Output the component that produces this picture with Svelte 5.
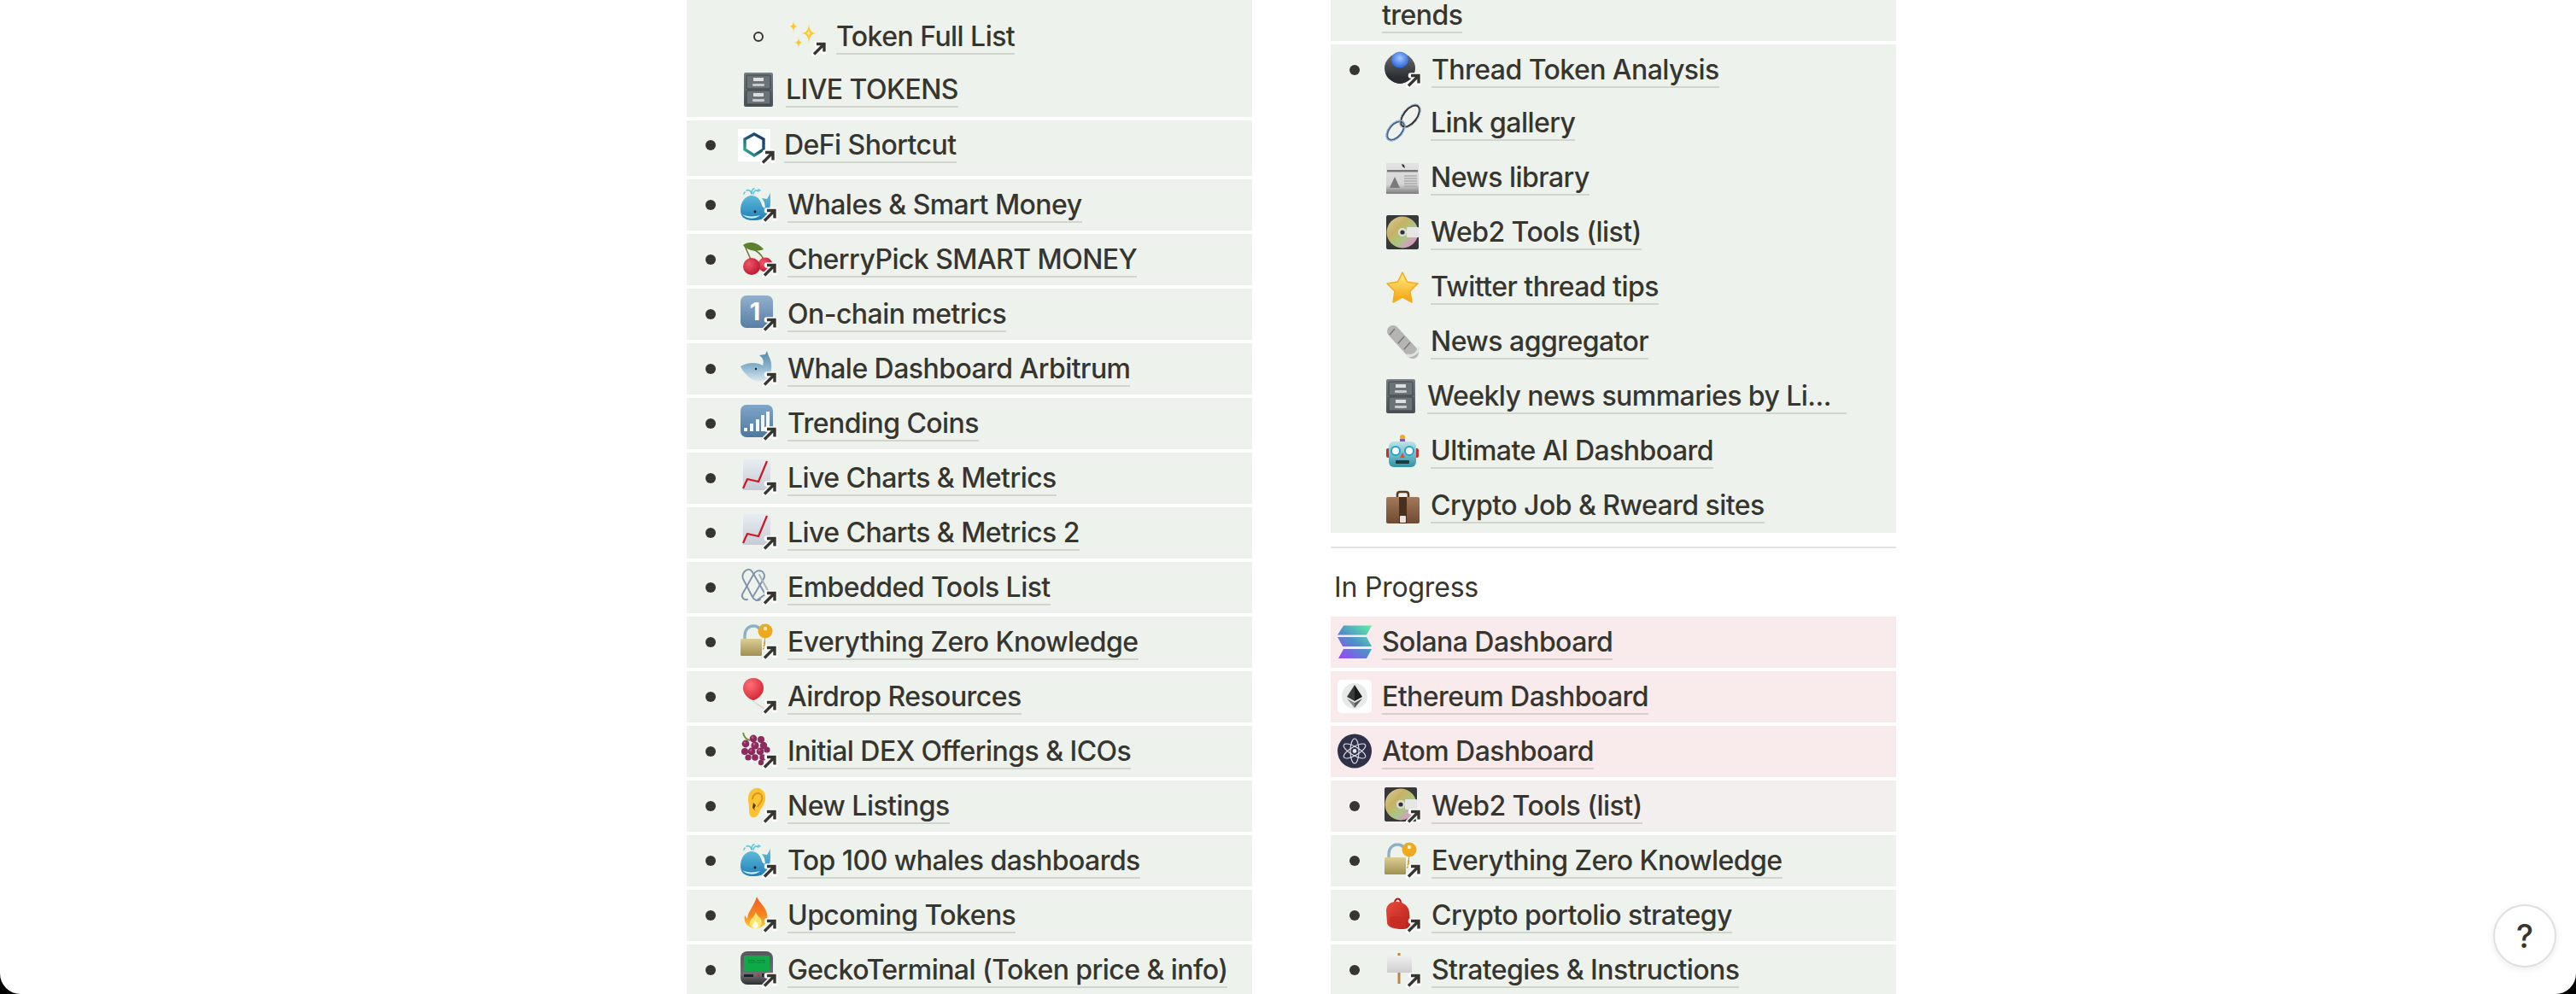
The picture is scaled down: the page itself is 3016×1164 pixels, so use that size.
<script>
	const star = (x, y, r, fill) =>
		`<path fill="${fill}" d="M${x} ${y - r}Q${x} ${y} ${x + r * 0.7} ${y}Q${x} ${y} ${x} ${y + r}Q${x} ${y} ${x - r * 0.7} ${y}Q${x} ${y} ${x} ${y - r}Z"/>`;

	const lineChart = `<defs><linearGradient id="pg" x1="0" y1="0" x2="0" y2="1"><stop offset="0" stop-color="#e9edf3"/><stop offset="1" stop-color="#c6ccd6"/></linearGradient></defs>
		<rect x="3" y="0" width="32" height="36" fill="url(#pg)"/>
		<path d="M3 34L8 23L21 26L31 2" fill="none" stroke="#cf1620" stroke-width="2.2" stroke-linejoin="round"/>`;

	const blueWhale = `<defs><linearGradient id="wh" x1="0" y1="0" x2="0" y2="1"><stop offset="0" stop-color="#66bfe0"/><stop offset="1" stop-color="#1f7fb6"/></linearGradient></defs>
		<path fill="url(#wh)" d="M0 28C0 18 6 11 13 11c7 0 10 5 12 11 1 3 2 4 4 3l-1-6-3-5 6 1 4-7 0 10c0 10-4 17-9 20-4 2-8 2-12 2C6 40 0 37 0 28z"/>
		<path fill="#d3edf6" d="M2 33c5 3 14 3 21 1-5 5-16 5-21-1z"/>
		<circle cx="17" cy="30" r="1.4" fill="#111"/>
		<path d="M13 9c0-4 1-6 3-6M13 9c-1-4-3-5-6-4M15 9c1-4 3-5 6-3M5 7l-1 2M21 4l2 1" fill="none" stroke="#58c3dc" stroke-width="1.6" stroke-linecap="round"/>`;

	const cabinet = `<defs><linearGradient id="cb" x1="0" y1="0" x2="0" y2="1"><stop offset="0" stop-color="#777e84"/><stop offset="1" stop-color="#4a5056"/></linearGradient></defs>
		<rect x="0" y="0" width="34" height="40" rx="2" fill="url(#cb)"/>
		<rect x="3" y="3" width="28" height="16" rx="1" fill="#6b7278" stroke="#3e4349"/>
		<rect x="3" y="21" width="28" height="16" rx="1" fill="#6b7278" stroke="#3e4349"/>
		<rect x="11" y="6" width="12" height="4" fill="#dcdee0"/><rect x="10" y="13" width="14" height="3" rx="1" fill="#c6c9cc"/>
		<rect x="11" y="24" width="12" height="4" fill="#dcdee0"/><rect x="10" y="31" width="14" height="3" rx="1" fill="#c6c9cc"/>`;

	const lock = `<defs><linearGradient id="lk" x1="0" y1="0" x2="0" y2="1"><stop offset="0" stop-color="#dccf94"/><stop offset="1" stop-color="#a09050"/></linearGradient></defs>
		<path d="M5 20v-6C5 7 10 3 15 3s8 3 9 7" fill="none" stroke="#8fb0c4" stroke-width="3.4"/>
		<rect x="0" y="18" width="25" height="20" rx="1.5" fill="url(#lk)"/>
		<path d="M29 14v15l-3 2v-2l2-1-2-2 2-1-1-1z" fill="#d99a1c"/>
		<circle cx="29" cy="9" r="8.5" fill="#eda920"/><circle cx="29" cy="6" r="2.2" fill="#fff3c9"/>`;

	const disc = `<defs><linearGradient id="cd" x1="0" y1="0" x2="1" y2="1"><stop offset="0" stop-color="#d8cf9f"/><stop offset=".35" stop-color="#c6b266"/><stop offset=".6" stop-color="#a9c782"/><stop offset=".8" stop-color="#d49fc0"/><stop offset="1" stop-color="#b99c6b"/></linearGradient></defs>
		<rect x="0" y="0" width="38" height="40" rx="2" fill="#37383a"/>
		<circle cx="19" cy="20" r="18.5" fill="url(#cd)"/>
		<circle cx="19" cy="20" r="5" fill="#ddd"/><circle cx="19" cy="20" r="2.6" fill="#333"/>
		<rect x="24" y="14" width="14" height="12" rx="1" fill="#e6e6e4"/>`;

	const icons = {
		sparkles: star(22, 16, 13, '#fcc72b') + star(4, 8, 7, '#fcc72b') + star(10, 27, 7, '#fcc72b') + star(22, 16, 5, '#fff0a8'),
		cabinet,
		defi: `<defs><linearGradient id="df" x1="1" y1="0" x2="0" y2="1"><stop offset="0" stop-color="#1a3a6b"/><stop offset=".55" stop-color="#1f5f78"/><stop offset="1" stop-color="#3fb59a"/></linearGradient></defs>
			<rect x="0" y="0" width="38" height="38" fill="#fff"/>
			<path d="M19 6L30 12V24L19 31L8 24V12Z" fill="none" stroke="url(#df)" stroke-width="3.4"/>`,
		whale: blueWhale,
		cherry: `<defs><radialGradient id="ch" cx=".35" cy=".35" r=".8"><stop offset="0" stop-color="#f0566a"/><stop offset="1" stop-color="#b50e24"/></radialGradient></defs>
			<path d="M5 6L13 24M7 6C16 10 24 14 27 22" fill="none" stroke="#6d7c2c" stroke-width="1.6"/>
			<path d="M3 5C9 0 20 1 27 10C19 13 8 12 3 5Z" fill="#5d7f30"/>
			<circle cx="29" cy="28" r="8.5" fill="url(#ch)"/><circle cx="13" cy="30" r="10" fill="url(#ch)"/>`,
		keycap: `<defs><linearGradient id="kc" x1="0" y1="0" x2="0" y2="1"><stop offset="0" stop-color="#92b0cb"/><stop offset="1" stop-color="#577ea6"/></linearGradient></defs>
			<rect x="0" y="0" width="38" height="38" rx="7" fill="url(#kc)"/>
			<text x="17" y="29" font-family="Inter" font-weight="700" font-size="29" fill="#fff" text-anchor="middle">1</text>`,
		whale2: `<defs><linearGradient id="wg" x1="0" y1="0" x2="0" y2="1"><stop offset="0" stop-color="#4f87ab"/><stop offset=".55" stop-color="#8fb6cf"/><stop offset="1" stop-color="#dbe8ee"/></linearGradient></defs>
			<path fill="url(#wg)" d="M0 19C8 14 20 14 26 18C28 13 26 9 22 6L29 5L31 1L33 7C38 15 37 26 32 33C26 39 14 37 8 30C4 26 1 22 0 19Z"/>
			<circle cx="18" cy="22" r="1.2" fill="#15222c"/>`,
		bars: `<defs><linearGradient id="br" x1="0" y1="0" x2="0" y2="1"><stop offset="0" stop-color="#80a6c8"/><stop offset="1" stop-color="#4c789f"/></linearGradient></defs>
			<rect x="0" y="0" width="38" height="38" rx="7" fill="url(#br)"/>
			<g fill="#f4f6f8"><rect x="4" y="27" width="4" height="4"/><rect x="11" y="22" width="4" height="9"/><rect x="18" y="17" width="4" height="14"/><rect x="24" y="12" width="4" height="19"/><rect x="30" y="8" width="4" height="23"/></g>`,
		chart: lineChart,
		clips: `<g fill="none" stroke="#7f91a8" stroke-width="1.9" stroke-linecap="round">
				<path d="M19 37L29 30L14 4C12 0 8 0 5 3C2 6 2 9 3 12L14 33C16 37 20 38 23 36"/>
				<path d="M8 36C4 37 1 34 2 30L15 7C17 3 21 1 25 3C28 5 29 9 27 12L15 32"/>
				<path d="M22 7L36 33" stroke="#a4b2c2"/>
			</g>`,
		lock,
		balloon: `<defs><radialGradient id="bl" cx=".35" cy=".3" r=".8"><stop offset="0" stop-color="#ff6f78"/><stop offset="1" stop-color="#cf1f2e"/></radialGradient></defs>
			<path d="M15 27C18 31 24 32 30 38" fill="none" stroke="#cfd3d0" stroke-width="1.2"/>
			<path d="M15 0C23 0 27 6 27 12C27 19 20 25 15 26C10 25 3 19 3 12C3 6 7 0 15 0Z" fill="url(#bl)"/>`,
		grapes: `<path d="M3 0C4 5 7 8 11 9" fill="none" stroke="#6e8c3a" stroke-width="1.8"/>
			<g fill="#8c2b5e"><circle cx="15" cy="7" r="4.4"/><circle cx="24" cy="8" r="4"/><circle cx="6" cy="13" r="4.4"/><circle cx="17" cy="15" r="4.6"/><circle cx="27" cy="15" r="4.2"/><circle cx="31" cy="20" r="3.6"/><circle cx="5" cy="22" r="4"/><circle cx="13" cy="22" r="4.4"/><circle cx="23" cy="22" r="4.4"/><circle cx="9" cy="29" r="3.6"/><circle cx="17" cy="29" r="3.8"/><circle cx="26" cy="29" r="3.8"/><circle cx="24" cy="35" r="3.2"/></g>
			<g fill="#c05a8c"><circle cx="14" cy="5.5" r="1.3"/><circle cx="16" cy="13.5" r="1.4"/><circle cx="5" cy="11.5" r="1.2"/><circle cx="22" cy="20.5" r="1.3"/><circle cx="12" cy="20.5" r="1.2"/></g>`,
		ear: `<path fill="#fbc233" d="M9 13C9 5 15 0 21 1C27 2 30 8 29 15C28 21 25 23 23 27C21 32 19 36 14 35C10 34 10 29 10 25C10 21 9 18 9 13Z"/>
			<path fill="none" stroke="#d9921a" stroke-width="1.8" d="M14 14C14 9 18 6 22 7C25 8 26 12 25 15C24 18 21 20 20 23"/>
			<path fill="#5c3a10" d="M15 18L18 21L16 25L18 28L14 24Z"/>`,
		fire: `<defs><linearGradient id="fr" x1="0" y1="0" x2="0" y2="1"><stop offset="0" stop-color="#f25c1f"/><stop offset=".6" stop-color="#f7881f"/><stop offset="1" stop-color="#ffd23f"/></linearGradient></defs>
			<path fill="url(#fr)" d="M19 0C21 6 29 11 31 20C33 28 28 37 18 37C8 37 3 30 5 22L8 26C8 18 16 11 19 0Z"/>
			<path fill="#ffe36a" d="M18 18C19 23 25 25 25 30C25 34 22 37 18 37C13 37 10 34 11 30C12 26 16 24 18 18Z"/>
			<path fill="#fffbe0" d="M17 27C18 30 21 31 21 33C21 36 19 37 17 37C15 37 13 35 14 33C15 31 16 30 17 27Z"/>`,
		pager: `<defs><linearGradient id="pgr" x1="0" y1="0" x2="0" y2="1"><stop offset="0" stop-color="#55585c"/><stop offset=".7" stop-color="#6c6f73"/><stop offset="1" stop-color="#2d2f31"/></linearGradient></defs>
			<rect x="0" y="0" width="38" height="39" rx="8" fill="url(#pgr)"/>
			<rect x="4" y="5" width="30" height="18" rx="1.5" fill="#0faa48"/>
			<text x="19" y="14" font-family="Inter" font-size="4.6" fill="#0b6a2e" text-anchor="middle">555-3215</text>
			<rect x="4" y="27" width="11" height="3" fill="#222"/><circle cx="21" cy="28" r="1.6" fill="#c9302c"/><rect x="25" y="26" width="9" height="4" fill="#2b2b2b"/>`,
		ball: `<defs><linearGradient id="tb" x1="0" y1="0" x2="0" y2="1"><stop offset="0" stop-color="#6a6f75"/><stop offset="1" stop-color="#1c1e22"/></linearGradient><radialGradient id="tb2" cx=".5" cy=".4" r=".7"><stop offset="0" stop-color="#a2c8ff"/><stop offset="1" stop-color="#1753d0"/></radialGradient></defs>
			<ellipse cx="18" cy="20" rx="18" ry="17.5" fill="url(#tb)"/>
			<ellipse cx="18" cy="10" rx="10" ry="9.5" fill="url(#tb2)"/>
			<path fill="#2b2d30" d="M1 25c3 8 11 13 17 13s14-5 17-13c-4 4-11 6-17 6s-13-2-17-6z"/>`,
		link: `<g fill="none" stroke-width="2.6"><ellipse cx="11" cy="29" rx="13" ry="7.5" transform="rotate(-50 11 29)" stroke="#48668f"/><ellipse cx="28" cy="12" rx="15" ry="8" transform="rotate(-52 28 12)" stroke="#3a2f33"/></g>
			<g fill="none" stroke="#a9c6e8" stroke-width=".9"><ellipse cx="11" cy="29" rx="14" ry="8.6" transform="rotate(-50 11 29)"/><ellipse cx="28" cy="12" rx="16" ry="9.1" transform="rotate(-52 28 12)"/></g>`,
		paper: `<defs><linearGradient id="np" x1="0" y1="0" x2="0" y2="1"><stop offset="0" stop-color="#e2e2e2"/><stop offset=".7" stop-color="#d4d4d4"/><stop offset="1" stop-color="#7b7b7b"/></linearGradient></defs>
			<rect x="0" y="3" width="38" height="36" fill="url(#np)"/>
			<rect x="1" y="11" width="36" height="2.4" fill="#777"/><path d="M18 4l3 1 1 4-3-2z" fill="#333"/>
			<path d="M10 19L16 32H4Z" fill="#7a7a7a"/>
			<g stroke="#979797" stroke-width="1"><path d="M21 18H36M21 21H36M21 24H36M21 27H36M21 30H36M3 35H36"/></g>`,
		disc,
		star: `<defs><linearGradient id="st" x1="0" y1="0" x2="0" y2="1"><stop offset="0" stop-color="#ffec8a"/><stop offset="1" stop-color="#f4a20a"/></linearGradient></defs>
			<path fill="url(#st)" stroke="#f4ad1f" stroke-width="1.6" stroke-linejoin="round" d="M19 3L24.5 14L37 16L28 25L30 38L19 32L8 38L10 25L1 16L13.5 14Z"/>`,
		roll: `<path d="M8 8L31 33" stroke="#b4b4b2" stroke-width="14" stroke-linecap="round"/>
			<path d="M4 12L10 5M14 22L21 14M21 29L28 21" stroke="#777" stroke-width="1.4"/>
			<path d="M24 36C30 38 38 34 38 26" fill="none" stroke="#e3e3e1" stroke-width="3"/>`,
		robot: `<defs><linearGradient id="rb" x1="0" y1="0" x2="0" y2="1"><stop offset="0" stop-color="#bfe3e6"/><stop offset="1" stop-color="#2f93a5"/></linearGradient></defs>
			<circle cx="19" cy="4" r="3" fill="#f5a623"/><rect x="16" y="6" width="6" height="4" fill="#7d5bb0"/>
			<rect x="0" y="17" width="6" height="11" rx="2" fill="#c9302c"/><rect x="32" y="17" width="6" height="11" rx="2" fill="#c9302c"/>
			<rect x="3" y="9" width="32" height="30" rx="6" fill="url(#rb)"/>
			<circle cx="11" cy="20" r="5" fill="#fff" stroke="#1ba6cf" stroke-width="2"/><circle cx="27" cy="20" r="5" fill="#fff" stroke="#1ba6cf" stroke-width="2"/>
			<path d="M19 22L22 28H16Z" fill="#e8483c"/>
			<rect x="11" y="31" width="16" height="4" rx="1" fill="#1c3b44"/>`,
		case: `<defs><linearGradient id="bc" x1="0" y1="0" x2="0" y2="1"><stop offset="0" stop-color="#a37a5a"/><stop offset="1" stop-color="#6e4a30"/></linearGradient></defs>
			<path d="M13 12V7C13 5 14 4 16 4H23C25 4 26 5 26 7V12" fill="none" stroke="#5d3b23" stroke-width="2.6"/>
			<rect x="0" y="10" width="39" height="31" rx="2" fill="url(#bc)"/>
			<rect x="15" y="10" width="9" height="31" fill="#4a2f1c"/><rect x="16" y="32" width="7" height="8" rx="1" fill="#e6e2dc"/>`,
		solana: `<defs><linearGradient id="sl" gradientUnits="userSpaceOnUse" x1="4" y1="40" x2="36" y2="0"><stop offset="0" stop-color="#9a45f5"/><stop offset=".5" stop-color="#4f8fc9"/><stop offset="1" stop-color="#5eeaa6"/></linearGradient></defs>
			<g fill="url(#sl)"><path d="M7 0.5H40L34 11.5H0Z"/><path d="M0 14H34L40 25H6Z"/><path d="M7 28H40L34 39H1Z"/></g>`,
		eth: `<rect x="0" y="0" width="40" height="39" rx="5" fill="#fff"/><circle cx="20" cy="19" r="15" fill="#e8e9e9"/>
			<path d="M20 6V25L11 20Z" fill="#3a3a3c"/><path d="M20 6V25L29 20Z" fill="#1b1b1d"/>
			<path d="M11 22L20 27V33Z" fill="#8a8a8c"/><path d="M29 22L20 27V33Z" fill="#5a5a5c"/>`,
		atom: `<circle cx="20" cy="19.5" r="20" fill="#2e3148"/>
			<g fill="none" stroke="#e4e5ee" stroke-width="1.1"><ellipse cx="20" cy="19.5" rx="5" ry="14.5"/><ellipse cx="20" cy="19.5" rx="5" ry="14.5" transform="rotate(60 20 19.5)"/><ellipse cx="20" cy="19.5" rx="5" ry="14.5" transform="rotate(120 20 19.5)"/></g>
			<circle cx="20" cy="19.5" r="2.4" fill="#e4e5ee"/>`,
		backpack: `<defs><linearGradient id="bp" x1="0" y1="0" x2="1" y2="1"><stop offset="0" stop-color="#ea4a3c"/><stop offset="1" stop-color="#b5201a"/></linearGradient></defs>
			<path fill="none" stroke="#a81d18" stroke-width="2" d="M12 7C12 3 15 2 17 3C19 4 19 6 19 7"/>
			<path fill="url(#bp)" d="M2 16C2 9 9 5 16 6C23 7 28 11 29 18L30 32C30 36 26 38 20 38C12 38 4 36 3 31Z"/>
			<path fill="#c92c24" d="M6 24C12 22 20 23 25 26L25 36C18 37 10 36 7 33Z"/>`,
		sign: `<defs><linearGradient id="sg" x1="0" y1="0" x2="0" y2="1"><stop offset="0" stop-color="#efefef"/><stop offset="1" stop-color="#cfcfcf"/></linearGradient></defs>
			<rect x="15.5" y="2" width="3" height="36" fill="#b8864b"/><rect x="3" y="5" width="29" height="20" rx="1" fill="url(#sg)"/>`
	};

	const rows = [
		['whale', 'Whales & Smart Money'],
		['cherry', 'CherryPick SMART MONEY'],
		['keycap', 'On-chain metrics'],
		['whale2', 'Whale Dashboard Arbitrum'],
		['bars', 'Trending Coins'],
		['chart', 'Live Charts & Metrics'],
		['chart', 'Live Charts & Metrics 2'],
		['clips', 'Embedded Tools List'],
		['lock', 'Everything Zero Knowledge'],
		['balloon', 'Airdrop Resources'],
		['grapes', 'Initial DEX Offerings & ICOs'],
		['ear', 'New Listings'],
		['whale', 'Top 100 whales dashboards'],
		['fire', 'Upcoming Tokens'],
		['pager', 'GeckoTerminal (Token price & info)']
	];

	const threadLinks = [
		['link', 'Link gallery'],
		['paper', 'News library'],
		['disc', 'Web2 Tools (list)'],
		['star', 'Twitter thread tips'],
		['roll', 'News aggregator'],
		['cabinet', 'Weekly news summaries by Li...'],
		['robot', 'Ultimate AI Dashboard'],
		['case', 'Crypto Job & Rweard sites']
	];

	const progress = [
		['solana', 'Solana Dashboard'],
		['eth', 'Ethereum Dashboard'],
		['atom', 'Atom Dashboard']
	];

	const progressLinks = [
		['disc', 'Web2 Tools (list)', 'grey'],
		['lock', 'Everything Zero Knowledge', ''],
		['backpack', 'Crypto portolio strategy', ''],
		['sign', 'Strategies & Instructions', '']
	];
</script>

{#snippet glyph(name, arrow)}
	<span class="ic" class:narrow={name === 'cabinet'} class:boxed={name === 'defi'}>
		<svg class="art" viewBox="0 0 40 40" width="40" height="40">{@html icons[name]}</svg>
		{#if arrow}
			<svg class="arrow" viewBox="0 0 18 18" width="18" height="18">
				<path d="M3 15.5L14.5 4M6 3.5H15V12.5" fill="none" stroke="#fff" stroke-width="6.6" stroke-linejoin="round" stroke-linecap="round" />
				<path d="M3 15.5L14.5 4M6 3.5H15V12.5" fill="none" stroke="#37352f" stroke-width="3.4" />
			</svg>
		{/if}
	</span>
{/snippet}

{#snippet item(name, label, tone = '')}
	<div class="row item {tone}">
		<span class="bullet"></span>
		{@render glyph(name, true)}
		<span class="link">{label}</span>
	</div>
{/snippet}

<div class="page">
	<div class="col">
		<div class="clip left-top">
			<div class="row nested">
				<span class="ring"></span>
				{@render glyph('sparkles', true)}
				<span class="link">Token Full List</span>
			</div>
			<div class="row sub live">
				{@render glyph('cabinet', false)}
				<span class="link">LIVE TOKENS</span>
			</div>
		</div>
		<div class="row item defi">
			<span class="bullet"></span>
			{@render glyph('defi', true)}
			<span class="link">DeFi Shortcut</span>
		</div>
		{#each rows as [name, label]}
			{@render item(name, label)}
		{/each}
	</div>

	<div class="col">
		<div class="clip right-top">
			<div class="row trends"><span class="link">trends</span></div>
		</div>
		<div class="stack">
			{@render item('ball', 'Thread Token Analysis')}
			{#each threadLinks as [name, label]}
				<div class="row sub">
					{@render glyph(name, false)}
					<span class="link" class:tail={name === 'cabinet'}>{label}</span>
				</div>
			{/each}
		</div>
		<hr class="divider" />
		<div class="heading">In Progress</div>
		{#each progress as [name, label]}
			<div class="row red">
				{@render glyph(name, false)}
				<span class="link">{label}</span>
			</div>
		{/each}
		{#each progressLinks as [name, label, tone]}
			{@render item(name, label, tone)}
		{/each}
	</div>

	<button class="help" aria-label="Help">?</button>
</div>

<style>
	:global(body) {
		background: #000;
	}

	.page {
		position: relative;
		display: flex;
		gap: 92px;
		width: 3016px;
		height: 1164px;
		padding-left: 804px;
		box-sizing: border-box;
		overflow: hidden;
		background: #fff;
		border-radius: 0 0 24px 24px;
		font-family: Inter, 'Liberation Sans', sans-serif;
		color: #37352f;
	}

	.col {
		display: flex;
		flex: none;
		flex-direction: column;
		gap: 4px;
		width: 662px;
	}

	.clip {
		display: flex;
		flex: none;
		flex-direction: column;
		justify-content: flex-end;
		overflow: hidden;
		background: #edf3ec;
	}

	.left-top {
		height: 137px;
	}

	.right-top {
		height: 48px;
	}

	.stack {
		display: flex;
		flex-direction: column;
		background: #edf3ec;
	}

	.row {
		display: flex;
		flex: none;
		align-items: center;
		height: 60px;
		background: #edf3ec;
	}

	.item {
		padding-left: 22px;
	}

	.item .ic {
		margin-top: -4px;
	}

	.item.grey {
		background: #f3efee;
	}

	.row.defi {
		box-sizing: border-box;
		height: 65px;
		padding-bottom: 7px;
	}

	.defi .bullet {
		margin-right: 26px;
	}

	.item.defi .ic {
		width: 38px;
		height: 38px;
		margin: 0 16px 0 0;
	}

	.nested {
		padding-left: 78px;
	}

	.nested .ic {
		margin-right: 14px;
	}

	.sub {
		height: 64px;
		padding-left: 65px;
	}

	.sub .ic {
		width: 38px;
		margin-right: 14px;
	}

	.sub .ic.narrow {
		width: 34px;
	}

	.live {
		padding-left: 67px;
	}

	.live .ic.narrow {
		margin-right: 15px;
	}

	.trends {
		padding-left: 60px;
	}

	.red {
		padding-left: 8px;
		background: #f9ebeb;
	}

	.red .ic {
		margin-right: 12px;
	}

	.bullet {
		flex: none;
		width: 12px;
		height: 12px;
		margin-right: 29px;
		border-radius: 50%;
		background: #37352f;
	}

	.ring {
		flex: none;
		width: 12px;
		height: 12px;
		margin-right: 31px;
		box-sizing: border-box;
		border: 2.5px solid #37352f;
		border-radius: 50%;
	}

	.ic {
		position: relative;
		display: block;
		flex: none;
		width: 40px;
		height: 40px;
		margin-right: 15px;
	}

	.art {
		display: block;
		overflow: visible;
	}

	.arrow {
		position: absolute;
		right: -3px;
		bottom: -3px;
	}

	.boxed .arrow {
		right: -6px;
		bottom: -4px;
	}

	.link {
		margin-top: 2px;
		border-bottom: 2px solid rgba(55, 53, 47, 0.16);
		font-size: 32px;
		font-weight: 500;
		letter-spacing: -0.55px;
		line-height: 38px;
		white-space: nowrap;
	}

	.tail {
		padding-right: 18px;
	}

	.divider {
		flex: none;
		height: 2px;
		margin: 12px 0 0;
		border: 0;
		background: #e3e3e2;
	}

	.heading {
		flex: none;
		box-sizing: border-box;
		height: 72px;
		padding: 23px 0 0 4px;
		font-size: 32px;
		letter-spacing: -0.2px;
		line-height: 38px;
	}

	.help {
		position: absolute;
		right: 23px;
		bottom: 31px;
		width: 74px;
		height: 74px;
		padding: 0;
		border: 2px solid #e0e0df;
		border-radius: 50%;
		background: #fff;
		box-shadow: 0 2px 8px rgba(15, 15, 15, 0.08);
		color: #37352f;
		font-family: Inter, sans-serif;
		font-size: 38px;
		font-weight: 500;
	}
</style>
